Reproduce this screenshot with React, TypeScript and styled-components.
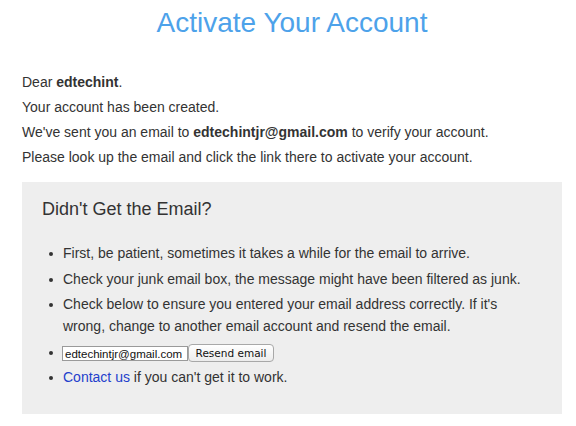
import React from "react";
import styled, { createGlobalStyle } from "styled-components";

const Global = createGlobalStyle`
  html, body { margin: 0; padding: 0; background: #fff; }
  body { font-family: "Liberation Sans", Arial, Helvetica, sans-serif; color: #333; }
`;

const Page = styled.div`
  padding: 7px 14px 0 22px;
`;

const Title = styled.h1`
  margin: 0;
  font-size: 28px;
  font-weight: normal;
  line-height: 32px;
  text-align: center;
  color: #4da2ea;
`;

const Intro = styled.div`
  margin-top: 31px;
  font-size: 14px;
  line-height: 25px;
`;

const Line = styled.p`
  margin: 0;
`;

const Panel = styled.section`
  margin-top: 12px;
  background: #eeeeee;
  padding: 16px 20px 26px 20px;
`;

const PanelTitle = styled.h2`
  margin: 0;
  font-size: 18px;
  font-weight: normal;
  line-height: 22px;
  color: #333;
`;

const Tips = styled.ul`
  list-style: none;
  margin: 22px 0 0 0;
  padding: 0 0 0 7px;
  font-size: 14px;
  line-height: 22px;
`;

const Tip = styled.li`
  display: flex;
  align-items: flex-start;
  margin-bottom: 3.5px;
  &:last-child { margin-bottom: 0; }
`;

const Dot = styled.span`
  flex: none;
  width: 4px;
  height: 4px;
  border-radius: 50%;
  background: #333;
  margin: 10px 10px 0 0;
`;

const Body = styled.span<{ $row?: boolean }>`
  display: ${(p) => (p.$row ? "flex" : "block")};
  align-items: center;
  min-height: 22px;
  padding-top: ${(p) => (p.$row ? "2px" : "0")};
  box-sizing: border-box;
`;

const EmailInput = styled.input`
  box-sizing: border-box;
  width: 126px;
  height: 15px;
  margin: 2px 0 0 -1px;
  padding: 0 2px;
  border: 1px solid #9a9a9a;
  background: #fff;
  font-family: "Liberation Sans", Arial, sans-serif;
  font-size: 11.5px;
  color: #111;
  outline: none;
`;

const ResendButton = styled.button`
  box-sizing: border-box;
  width: 86px;
  height: 18px;
  margin: 0;
  padding: 0;
  border: 1px solid #a8a8a8;
  border-radius: 4px;
  background: linear-gradient(#ffffff, #ececec);
  font-family: "DejaVu Sans", Verdana, sans-serif;
  font-size: 10.5px;
  color: #111;
  line-height: 16px;
`;

const Link = styled.a`
  color: #2340cc;
  text-decoration: none;
`;

export default function App() {
  return (
    <>
      <Global />
      <Page>
        <Title>Activate Your Account</Title>
        <Intro>
          <Line>
            Dear <b>edtechint</b>.
          </Line>
          <Line>Your account has been created.</Line>
          <Line>
            We've sent you an email to <b>edtechintjr@gmail.com</b> to verify your account.
          </Line>
          <Line>Please look up the email and click the link there to activate your account.</Line>
        </Intro>
        <Panel>
          <PanelTitle>Didn't Get the Email?</PanelTitle>
          <Tips>
            <Tip>
              <Dot />
              <Body>First, be patient, sometimes it takes a while for the email to arrive.</Body>
            </Tip>
            <Tip>
              <Dot />
              <Body>Check your junk email box, the message might have been filtered as junk.</Body>
            </Tip>
            <Tip>
              <Dot />
              <Body>
                Check below to ensure you entered your email address correctly. If it's wrong,
                change to another email account and resend the email.
              </Body>
            </Tip>
            <Tip>
              <Dot />
              <Body $row>
                <EmailInput defaultValue="edtechintjr@gmail.com" />
                <ResendButton>Resend email</ResendButton>
              </Body>
            </Tip>
            <Tip>
              <Dot />
              <Body>
                <Link href="#">Contact us</Link> if you can't get it to work.
              </Body>
            </Tip>
          </Tips>
        </Panel>
      </Page>
    </>
  );
}
